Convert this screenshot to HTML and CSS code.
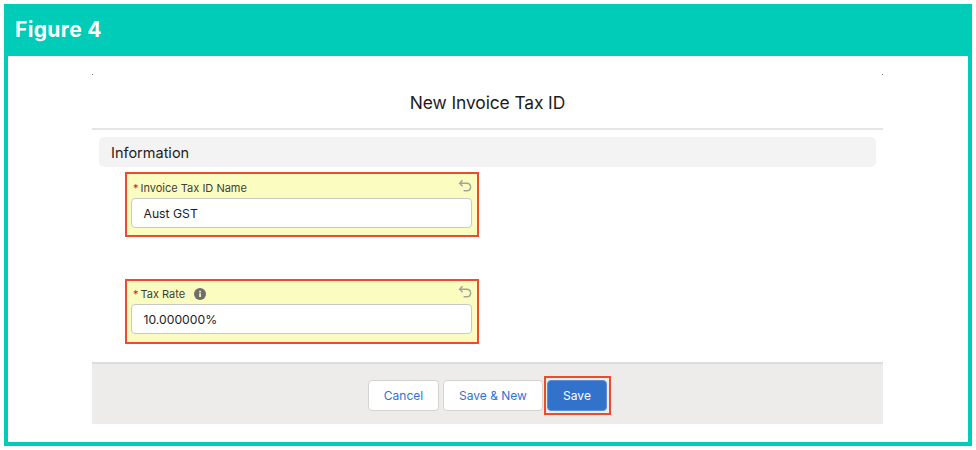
FILE: index.html
```html
<!DOCTYPE html>
<html lang="en">
<head>
<meta charset="utf-8">
<title>Figure 4</title>
<link rel="stylesheet" href="styles.css">
</head>
<body>
<div class="figure">
  <header class="figure-head">Figure 4</header>
  <main class="figure-body">
    <section class="modal">
      <div class="dots"><i></i><i></i></div>
      <h1 class="modal-title">New Invoice Tax ID</h1>
      <div class="modal-main">
        <h2 class="section-bar">Information</h2>
        <div class="field field-first">
          <div class="field-label">
            <span class="req">*</span><span>Invoice Tax ID Name</span>
            <svg class="undo" viewBox="0 0 14 14"><path d="M4.6 1.2 1.6 4.2 4.6 7.2M1.8 4.2H8.6C11 4.2 12.6 5.9 12.6 8S11 11.8 8.6 11.8H5.6"/></svg>
          </div>
          <div class="input">Aust GST</div>
        </div>
        <div class="field field-second">
          <div class="field-label">
            <span class="req">*</span><span>Tax Rate</span>
            <svg class="info" viewBox="0 0 12 12"><circle cx="6" cy="6" r="6"/><rect x="5.2" y="5.2" width="1.7" height="3.8"/><rect x="5.2" y="2.8" width="1.7" height="1.6"/></svg>
            <svg class="undo" viewBox="0 0 14 14"><path d="M4.6 1.2 1.6 4.2 4.6 7.2M1.8 4.2H8.6C11 4.2 12.6 5.9 12.6 8S11 11.8 8.6 11.8H5.6"/></svg>
          </div>
          <div class="input">10.000000%</div>
        </div>
      </div>
      <footer class="modal-foot">
        <button class="btn btn-cancel">Cancel</button>
        <button class="btn btn-new">Save &amp; New</button>
        <span class="save-mark"><button class="btn btn-save">Save</button></span>
      </footer>
    </section>
  </main>
</div>
</body>
</html>
```

FILE: styles.css
```css
* { box-sizing: border-box; }
html, body { margin: 0; padding: 0; background: #fff; }
body { width: 976px; height: 450px; padding: 4px; font-family: Inter, "Liberation Sans", sans-serif; overflow: hidden; }
.figure { width: 968px; height: 442px; border: 4px solid #00ccb8; border-top: 0; display: flex; flex-direction: column; }
.figure-head { height: 52px; margin: 0 -4px; padding: 0 11px 2px; background: #00ccb8; color: #fff; font-size: 21px; font-weight: 700; display: flex; align-items: center; letter-spacing: .35px; flex: none; }
.figure-body { flex: 1; padding: 18px 85px 18px 84px; background: #fff; display: flex; }
.modal { width: 791px; display: flex; flex-direction: column; }
.dots { height: 1px; display: flex; justify-content: space-between; flex: none; }
.dots i { width: 1px; height: 1px; background: #777; }
.modal-title { margin: 0; height: 55px; padding-top: 16px; font-size: 17.4px; line-height: 23px; font-weight: 400; color: #1c1c1c; text-align: center; border-bottom: 2px solid #e5e5e5; flex: none; letter-spacing: -.1px; }
.modal-main { flex: 1; padding: 7px 7px 0; }
.section-bar { margin: 0; height: 30px; padding: 0 12px; background: #f3f3f3; border-radius: 5px; font-size: 14.5px; line-height: 31px; font-weight: 400; color: #222; }
.field { width: 354px; height: 65px; margin-left: 26px; padding: 0 5px 0 4px; background: #fbfdc0; border: 2px solid #ee4a2c; }
.field-first { margin-top: 5px; }
.field-second { margin-top: 42px; }
.field-label { height: 24px; display: flex; align-items: center; padding: 4px 0 0 2px; font-size: 11px; color: #3e3e3c; position: relative; }
.field-second .field-label { height: 23px; padding-top: 2px; }
.req { color: #d0201c; margin-right: 2px; font-size: 11px; }
.undo { width: 14px; height: 14px; position: absolute; right: 0; top: 5px; fill: none; stroke: #a3a39a; stroke-width: 1.4; }
.field-second .undo { top: 4px; }
.info { width: 12px; height: 12px; margin-left: 9px; fill: #706e6b; }
.info rect { fill: #fbfdc0; }
.input { height: 30px; background: #fff; border: 1px solid #c9c9c9; border-radius: 4px; padding: 0 11.5px; font-size: 12.2px; line-height: 30px; color: #1c1c1c; }
.modal-foot { height: 62px; background: #edecea; border-top: 2px solid #ddd; display: flex; justify-content: center; align-items: center; gap: 4px; padding: 2px 0 0 3px; flex: none; }
.btn { height: 31px; border-radius: 4px; border: 1px solid #d5d3d0; background: #fff; color: #2e74cf; font: 12px Inter, "Liberation Sans", sans-serif; padding: 0; }
.btn-cancel { width: 71px; }
.btn-new { width: 100px; }
.btn-save { width: 60px; background: #3272cb; border-color: #5c8fd8; color: #fff; display: block; }
.save-mark { border: 2px solid #ee4a2c; padding: 2px 2px 2px 1px; margin-left: -3px; margin-right: -1px; background: #edecea; }
```
